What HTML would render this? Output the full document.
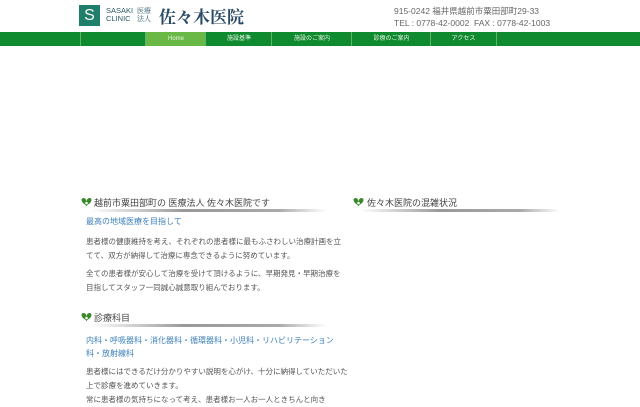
<!DOCTYPE html><html><head><meta charset="utf-8"><style>
body{margin:0;width:640px;height:400px;overflow:hidden;background:#fff;font-family:"Liberation Sans","Noto Sans CJK JP",sans-serif;color:#555}
.abs{position:absolute}
.nav{position:absolute;top:32px;left:0;width:640px;height:14px;background:#108a2e}
.nav div{position:absolute;top:0;height:14px;border-left:1px solid #5fb36d;color:#e8f5e8;font-size:6px;line-height:14px;text-align:center}
h2{position:absolute;margin:0;font-weight:normal;font-size:9px;color:#444;line-height:12px}
.ul{position:absolute;height:3px;background:linear-gradient(90deg,#fff,#999 40%,#aaa 80%,#fff);border-radius:2px}
.lk{color:#3b7fb9;font-size:8px;line-height:13px}
p{margin:0;font-size:7.5px;line-height:14px;color:#555}
.leaf{position:absolute;width:11px;height:10px}
</style></head><body>
<div class="abs" style="left:79px;top:5px;width:21px;height:21px;background:#1f7f6a;color:#fff;font-size:16px;line-height:21px;text-align:center">S</div>
<div class="abs" style="left:106px;top:7px;font-size:7.5px;line-height:8px;color:#2a5a66">SASAKI<br>CLINIC</div>
<div class="abs" style="left:137px;top:7px;font-size:7px;line-height:8px;color:#2a5a66;font-family:'Noto Serif CJK SC',serif">医療<br>法人</div>
<div class="abs" style="left:159px;top:5px;font-size:17px;line-height:22px;color:#2a4a66;font-family:'Noto Serif CJK SC',serif;font-weight:bold">佐々木医院</div>
<div class="abs" style="left:394px;top:5px;font-size:8.5px;line-height:12px;color:#666">915-0242 福井県越前市粟田部町29-33<br>TEL : 0778-42-0002&nbsp; FAX : 0778-42-1003</div>
<div class="nav">
<div style="left:80px;width:65px"></div>
<div style="left:145px;width:60px;background:#6ab845">Home</div>
<div style="left:205px;width:66px">施設基準</div>
<div style="left:271px;width:80px">施設のご案内</div>
<div style="left:351px;width:79px">診療のご案内</div>
<div style="left:430px;width:65px;border-right:1px solid #5fb36d">アクセス</div>
</div>
<svg class="leaf" style="left:81px;top:197px" viewBox="0 0 11 10"><path d="M5.5 9.5C5 7 1 7 .5 3 .5 1 2.5 .5 4 1.5 5 2.2 5.5 3.5 5.5 5 5.5 3.5 6 2.2 7 1.5 8.5 .5 10.5 1 10.5 3 10 7 6 7 5.5 9.5Z" fill="#3a8a2a"/><circle cx="5.5" cy="6" r="1.3" fill="#fff"/></svg>
<h2 style="left:94px;top:197px">越前市粟田部町の 医療法人 佐々木医院です</h2>
<div class="ul" style="left:90px;top:209px;width:236px"></div>
<div class="abs lk" style="left:86px;top:215px">最高の地域医療を目指して</div>
<div class="abs" style="left:86px;top:235px;width:262px"><p>患者様の健康維持を考え、それぞれの患者様に最もふさわしい治療計画を立てて、双方が納得して治療に専念できるように努めています。</p><p style="margin-top:4px">全ての患者様が安心して治療を受けて頂けるように、早期発見・早期治療を目指してスタッフ一同誠心誠意取り組んでおります。</p></div>
<svg class="leaf" style="left:81px;top:312px" viewBox="0 0 11 10"><path d="M5.5 9.5C5 7 1 7 .5 3 .5 1 2.5 .5 4 1.5 5 2.2 5.5 3.5 5.5 5 5.5 3.5 6 2.2 7 1.5 8.5 .5 10.5 1 10.5 3 10 7 6 7 5.5 9.5Z" fill="#3a8a2a"/><circle cx="5.5" cy="6" r="1.3" fill="#fff"/></svg>
<h2 style="left:94px;top:312px">診療科目</h2>
<div class="ul" style="left:90px;top:324px;width:236px"></div>
<div class="abs lk" style="left:86px;top:334px;width:262px">内科・呼吸器科・消化器科・循環器科・小児科・リハビリテーション科・放射線科</div>
<div class="abs" style="left:86px;top:365px;width:262px"><p>患者様にはできるだけ分かりやすい説明を心がけ、十分に納得していただいた上で診療を進めていきます。<br>常に患者様の気持ちになって考え、患者様お一人お一人ときちんと向き</p></div>
<svg class="leaf" style="left:353px;top:197px" viewBox="0 0 11 10"><path d="M5.5 9.5C5 7 1 7 .5 3 .5 1 2.5 .5 4 1.5 5 2.2 5.5 3.5 5.5 5 5.5 3.5 6 2.2 7 1.5 8.5 .5 10.5 1 10.5 3 10 7 6 7 5.5 9.5Z" fill="#3a8a2a"/><circle cx="5.5" cy="6" r="1.3" fill="#fff"/></svg>
<h2 style="left:367px;top:197px">佐々木医院の混雑状況</h2>
<div class="ul" style="left:360px;top:209px;width:200px"></div>
</body></html>
